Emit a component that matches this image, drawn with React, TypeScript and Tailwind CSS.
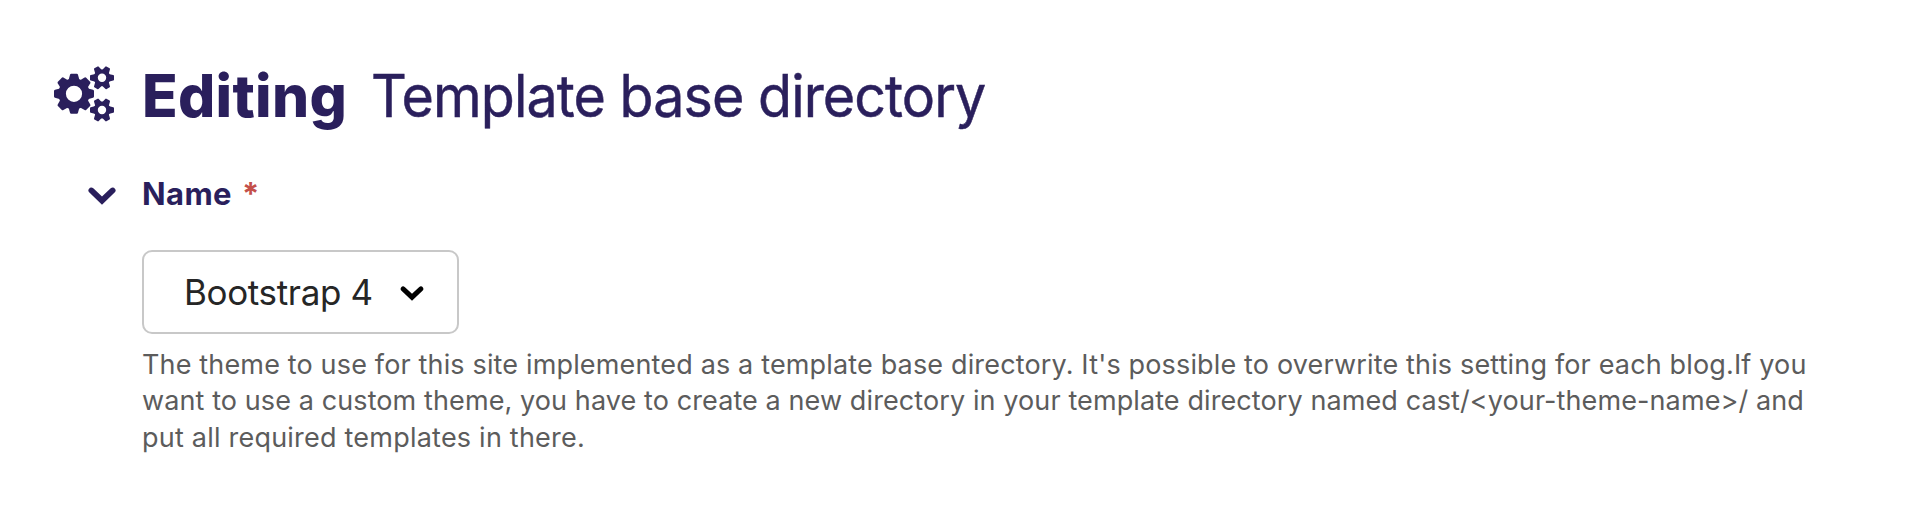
import React from "react";

const Chevron = ({ className }: { className: string }) => (
  <svg viewBox="0 0 28 18" className={className} fill="currentColor">
    <path d="M.9 1.9 Q2.8-.8 5.6 1.4 L14 9.4 L22.4 1.4 Q25.2-.8 27.1 1.9 Q28.5 3.8 26.6 5.6 L14 17.8 L1.4 5.6 Q-.5 3.8 .9 1.9Z" />
  </svg>
);

const Cog = ({ x, y, body, hole, teeth, tooth }: { x: number; y: number; body: number; hole: number; teeth: number; tooth: string }) => (
  <g transform={`translate(${x} ${y})`}>
    <circle r={(body + hole) / 2} fill="none" stroke="currentColor" strokeWidth={body - hole} />
    {Array.from({ length: teeth }, (_, i) => (
      <path key={i} d={tooth} fill="currentColor" transform={`rotate(${(i * 360) / teeth})`} />
    ))}
  </g>
);

const bigTooth = "M13 -5.6 L19 -4 Q20 -3.7 20 -2.8 V2.8 Q20 3.7 19 4 L13 5.6Z";
const smallTooth = "M6.5 -3.9 L11.2 -2.7 Q12 -2.5 12 -1.9 V1.9 Q12 2.5 11.2 2.7 L6.5 3.9Z";

const Cogs = () => (
  <svg viewBox="0 0 62 60" className="h-[60px] w-[62px] shrink-0">
    <Cog x={21} y={28.8} body={15.6} hole={8.1} teeth={8} tooth={bigTooth} />
    <Cog x={49} y={12.8} body={8.4} hole={4.2} teeth={6} tooth={smallTooth} />
    <Cog x={49} y={45} body={8.4} hole={4.2} teeth={6} tooth={smallTooth} />
  </svg>
);

export default function App() {
  return (
    <main className="h-[508px] w-[1908px] overflow-hidden bg-white pt-[61px] pl-[53px] font-['Inter',sans-serif] text-[#2a1f5c]">
      <h1 className="flex h-[68px] items-center">
        <Cogs />
        <span className="mt-[2px] ml-[27px] w-[229px] text-[58.5px] leading-[68px] font-extrabold tracking-[0.3px] whitespace-nowrap">Editing</span>
        <span className="mt-[2px] origin-left scale-x-[0.95] text-[58.5px] leading-[68px] font-normal tracking-[-0.98px] whitespace-nowrap [-webkit-text-stroke:0.5px_#2a1f5c]">Template base directory</span>
      </h1>
      <div className="mt-[45px] flex h-[40px] items-center">
        <Chevron className="mt-[3px] ml-[35px] h-[18px] w-[28px]" />
        <span className="ml-[26px] text-[31px] font-bold tracking-[0.4px]">Name</span>
        <span className="ml-[10px] text-[31px] font-bold text-[#c4504a]">*</span>
      </div>
      <div className="mt-[36px] ml-[89px] flex h-[84px] w-[317px] items-center rounded-[10px] border-2 border-[#c8c8c8] pl-[40px] text-[#262626]">
        <span className="w-[189px] text-[35px] tracking-[-0.35px] whitespace-nowrap">Bootstrap 4</span>
        <Chevron className="mt-[2px] ml-[27px] h-[15px] w-[24px] text-black" />
      </div>
      <div className="mt-[13px] ml-[89px] text-[27px] leading-[36.4px] whitespace-nowrap text-[#5c5c5c]">
        <p className="tracking-[0.155px]">The theme to use for this site implemented as a template base directory. It's possible to overwrite this setting for each blog.If you</p>
        <p className="tracking-[0.1px]">want to use a custom theme, you have to create a new directory in your template directory named cast/&lt;your-theme-name&gt;/ and</p>
        <p className="tracking-[0.22px]">put all required templates in there.</p>
      </div>
    </main>
  );
}
